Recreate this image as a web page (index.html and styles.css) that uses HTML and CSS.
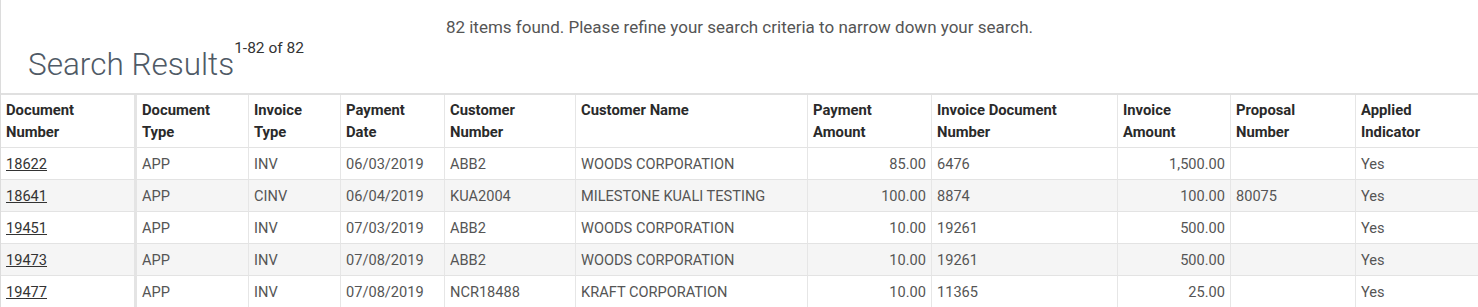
FILE: index.html
```html
<!DOCTYPE html>
<html lang="en">
<head>
<meta charset="utf-8">
<title>Search Results</title>
<link rel="stylesheet" href="styles.css">
</head>
<body>
<div class="page">
  <p class="notice">82 items found. Please refine your search criteria to narrow down your search.</p>
  <h1 class="title">Search Results<sup class="count">1-82 of 82</sup></h1>
  <table class="results">
    <colgroup>
      <col class="c1"><col class="c2"><col class="c3"><col class="c4"><col class="c5"><col class="c6"><col class="c7"><col class="c8"><col class="c9"><col class="c10"><col class="c11">
    </colgroup>
    <thead>
      <tr>
        <th class="first">Document<br>Number</th>
        <th>Document<br>Type</th>
        <th>Invoice<br>Type</th>
        <th>Payment<br>Date</th>
        <th>Customer<br>Number</th>
        <th>Customer Name</th>
        <th>Payment<br>Amount</th>
        <th>Invoice Document<br>Number</th>
        <th>Invoice<br>Amount</th>
        <th>Proposal<br>Number</th>
        <th>Applied<br>Indicator</th>
      </tr>
    </thead>
    <tbody>
      <tr>
        <td class="first"><a href="#">18622</a></td><td>APP</td><td>INV</td><td>06/03/2019</td><td>ABB2</td><td>WOODS CORPORATION</td><td class="num">85.00</td><td>6476</td><td class="num">1,500.00</td><td></td><td>Yes</td>
      </tr>
      <tr>
        <td class="first"><a href="#">18641</a></td><td>APP</td><td>CINV</td><td>06/04/2019</td><td>KUA2004</td><td>MILESTONE KUALI TESTING</td><td class="num">100.00</td><td>8874</td><td class="num">100.00</td><td>80075</td><td>Yes</td>
      </tr>
      <tr>
        <td class="first"><a href="#">19451</a></td><td>APP</td><td>INV</td><td>07/03/2019</td><td>ABB2</td><td>WOODS CORPORATION</td><td class="num">10.00</td><td>19261</td><td class="num">500.00</td><td></td><td>Yes</td>
      </tr>
      <tr>
        <td class="first"><a href="#">19473</a></td><td>APP</td><td>INV</td><td>07/08/2019</td><td>ABB2</td><td>WOODS CORPORATION</td><td class="num">10.00</td><td>19261</td><td class="num">500.00</td><td></td><td>Yes</td>
      </tr>
      <tr>
        <td class="first"><a href="#">19477</a></td><td>APP</td><td>INV</td><td>07/08/2019</td><td>NCR18488</td><td>KRAFT CORPORATION</td><td class="num">10.00</td><td>11365</td><td class="num">25.00</td><td></td><td>Yes</td>
      </tr>
    </tbody>
  </table>
</div>
</body>
</html>
```

FILE: styles.css
```css
html, body {
  margin: 0;
  padding: 0;
  background: #ffffff;
}

body {
  font-family: Roboto, "Liberation Sans", Arial, sans-serif;
  color: #555555;
}

.page {
  border-left: 1px solid #dcdcdc;
  min-height: 307px;
  box-sizing: border-box;
}

.notice {
  margin: 0;
  padding-top: 17px;
  height: 21px;
  line-height: 21px;
  font-size: 17px;
  text-align: center;
  color: #555555;
}

.title {
  margin: 0;
  padding: 4px 0 0 27px;
  height: 51px;
  font-size: 31.5px;
  line-height: 46px;
  font-weight: 300;
  color: #4f5a66;
}

.count {
  font-size: 15.5px;
  font-weight: 400;
  color: #333333;
  vertical-align: 22px;
  line-height: 0;
}

.results {
  width: 1477px;
  table-layout: fixed;
  border-collapse: separate;
  border-spacing: 0;
  border-top: 2px solid #e0e0e0;
  font-size: 14.6px;
}

.c1 { width: 136px; }
.c2 { width: 112px; }
.c3 { width: 92px; }
.c4 { width: 104px; }
.c5 { width: 131px; }
.c6 { width: 232px; }
.c7 { width: 124px; }
.c8 { width: 186px; }
.c9 { width: 113px; }
.c10 { width: 125px; }
.c11 { width: 122px; }

.results th,
.results td {
  border-right: 1px solid #e6e6e6;
  border-bottom: 1px solid #e3e3e3;
  padding: 0 5px;
  text-align: left;
  vertical-align: top;
}

.results th:last-child,
.results td:last-child {
  border-right: none;
}

.results th {
  font-size: 14.8px;
  font-weight: 700;
  color: #2a2a2a;
  line-height: 22px;
  padding-top: 4px;
  padding-bottom: 4px;
  height: 44px;
}

.results td {
  line-height: 21px;
  padding-top: 6px;
  padding-bottom: 4px;
  height: 21px;
  color: #555555;
  white-space: nowrap;
}

.results .first {
  border-right: 3px solid #e4e4e4;
  padding-left: 5px;
}

.results td.num {
  text-align: right;
}

.results tbody tr:nth-child(even) td {
  background: #f5f5f5;
}

.results a {
  color: #333333;
  text-decoration: underline;
}
```
